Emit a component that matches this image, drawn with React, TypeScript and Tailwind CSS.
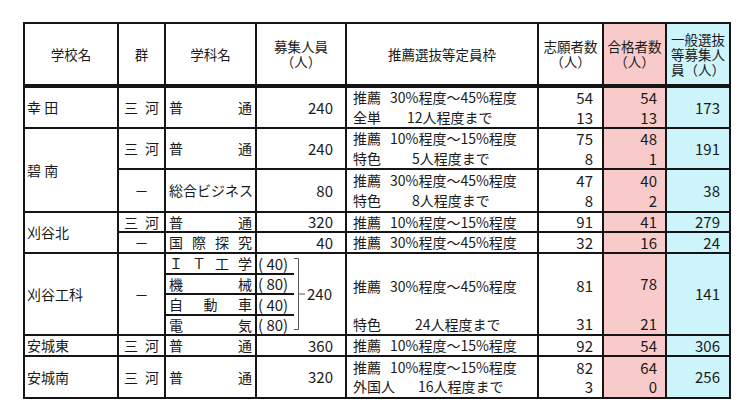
import React from 'react';

const pink = 'bg-[#f9caca]';
const cyan = 'bg-[#cdf4fa]';

type QuotaLine = [string, string, string];

const Spread = ({ text }: { text: string }) => (
  <div className="flex h-full items-center justify-between bg-white px-[3px]">
    {[...text].map((c, i) => (
      <span key={i}>{c}</span>
    ))}
  </div>
);

const Group = ({ mikawa }: { mikawa?: boolean }) =>
  mikawa ? (
    <div className="flex h-full items-center justify-center gap-[7px] bg-white">
      <span>三</span>
      <span>河</span>
    </div>
  ) : (
    <div className="flex h-full items-center justify-center bg-white">－</div>
  );

const School = ({ name }: { name: string }) => (
  <div className="flex h-full items-center bg-white pl-[2px]">{name}</div>
);

const Quota = ({ lines }: { lines: QuotaLine[] }) => (
  <div className="flex h-full flex-col justify-center bg-white pl-[6px]">
    {lines.map(([label, value, pad]) => (
      <div key={label + value} className="flex h-[19.5px] items-center whitespace-nowrap">
        <span className="w-[37px] shrink-0">{label}</span>
        <span className={pad}>{value}</span>
      </div>
    ))}
  </div>
);

const Nums = ({ vals, bg = 'bg-white', pr = 'pr-[9px]' }: { vals: string[]; bg?: string; pr?: string }) => (
  <div className={`flex h-full flex-col justify-center text-right text-[15px] ${pr} ${bg}`}>
    {vals.map((v, i) => (
      <div key={i} className="h-[19.5px] leading-[19.5px]">
        {v}
      </div>
    ))}
  </div>
);

const Head = ({ children, bg = 'bg-white' }: { children: React.ReactNode; bg?: string }) => (
  <div className={`flex h-full items-center justify-center border-b-2 border-[#151515] text-center text-[13.5px] leading-[15px] ${bg}`}>
    <div>{children}</div>
  </div>
);

const suisen30 = '30%程度～45%程度';
const suisen10 = '10%程度～15%程度';

export default function App() {
  return (
    <div className="h-[418px] w-[750px] bg-white pl-[23px] pt-[22px] font-['Noto_Sans_CJK_JP','Noto_Sans',sans-serif] text-[14px] text-[#1a1a1a]">
      <div className="grid w-fit grid-cols-[92px_45px_89px_88px_190px_63px_61px_62px] grid-rows-[62px_39px_39px_41px_18px_19px_80px_19px_40px] gap-[2px] bg-[#151515] p-[2px]">
        {/* header */}
        <Head>学校名</Head>
        <Head>群</Head>
        <Head>学科名</Head>
        <Head>
          募集人員
          <br />
          （人）
        </Head>
        <Head>推薦選抜等定員枠</Head>
        <Head>
          志願者数
          <br />
          （人）
        </Head>
        <Head bg={pink}>
          合格者数
          <br />
          （人）
        </Head>
        <Head bg={cyan}>
          一般選抜
          <br />
          等募集人
          <br />
          員（人）
        </Head>

        {/* 幸田 */}
        <School name="幸 田" />
        <Group mikawa />
        <Spread text="普通" />
        <Nums vals={['240']} pr="pr-[12px]" />
        <Quota
          lines={[
            ['推薦', suisen30, 'pl-0'],
            ['全単', '12人程度まで', 'pl-[17px]'],
          ]}
        />
        <Nums vals={['54', '13']} />
        <Nums vals={['54', '13']} bg={pink} pr="pr-[8px]" />
        <Nums vals={['173']} bg={cyan} />

        {/* 碧南 */}
        <div className="row-span-2">
          <School name="碧 南" />
        </div>
        <Group mikawa />
        <Spread text="普通" />
        <Nums vals={['240']} pr="pr-[12px]" />
        <Quota
          lines={[
            ['推薦', suisen10, 'pl-0'],
            ['特色', '5人程度まで', 'pl-[22px]'],
          ]}
        />
        <Nums vals={['75', '8']} />
        <Nums vals={['48', '1']} bg={pink} pr="pr-[8px]" />
        <Nums vals={['191']} bg={cyan} />

        <Group />
        <div className="flex h-full items-center bg-white pl-[3px]">総合ビジネス</div>
        <Nums vals={['80']} pr="pr-[12px]" />
        <Quota
          lines={[
            ['推薦', suisen30, 'pl-0'],
            ['特色', '8人程度まで', 'pl-[22px]'],
          ]}
        />
        <Nums vals={['47', '8']} />
        <Nums vals={['40', '2']} bg={pink} pr="pr-[8px]" />
        <Nums vals={['38']} bg={cyan} />

        {/* 刈谷北 */}
        <div className="row-span-2">
          <School name="刈谷北" />
        </div>
        <Group mikawa />
        <Spread text="普通" />
        <Nums vals={['320']} pr="pr-[12px]" />
        <Quota lines={[['推薦', suisen10, 'pl-0']]} />
        <Nums vals={['91']} />
        <Nums vals={['41']} bg={pink} pr="pr-[8px]" />
        <Nums vals={['279']} bg={cyan} />

        <Group />
        <Spread text="国際探究" />
        <Nums vals={['40']} pr="pr-[12px]" />
        <Quota lines={[['推薦', suisen30, 'pl-0']]} />
        <Nums vals={['32']} />
        <Nums vals={['16']} bg={pink} pr="pr-[8px]" />
        <Nums vals={['24']} bg={cyan} />

        {/* 刈谷工科 */}
        <School name="刈谷工科" />
        <Group />
        <div className="flex h-[80px] flex-col bg-white">
          {['ＩＴ工学', '機械', '自動車', '電気'].map((t, i) => (
            <div
              key={t}
              className={`flex min-h-0 flex-1 items-center justify-between px-[3px] leading-none ${
                i < 3 ? 'border-b-2 border-[#151515]' : ''
              }`}
            >
              {[...t].map((c, j) => (
                <span key={j}>{c}</span>
              ))}
            </div>
          ))}
        </div>
        <div className="flex h-[80px] bg-white">
          <div className="flex w-[37px] shrink-0 flex-col text-[15px]">
            {['40', '80', '40', '80'].map((n, i) => (
              <div
                key={i}
                className={`flex min-h-0 flex-1 items-center whitespace-pre pl-[1px] leading-none ${
                  i < 3 ? 'border-b-2 border-[#151515]' : ''
                }`}
              >
                {'( ' + n + ')'}
              </div>
            ))}
          </div>
          <svg width="13" height="80" viewBox="0 0 13 80" className="shrink-0">
            <path d="M0 4.5H4.5V75.5H0M4.5 40H11" fill="none" stroke="#555" strokeWidth="1" />
          </svg>
          <div className="flex flex-1 items-center text-[15px]">240</div>
        </div>
        <div className="flex h-full flex-col bg-white pl-[6px]">
          <div className="flex h-[60px] items-center whitespace-nowrap pt-[5px]">
            <span className="w-[37px] shrink-0">推薦</span>
            <span>{suisen30}</span>
          </div>
          <div className="flex h-[20px] items-center whitespace-nowrap">
            <span className="w-[37px] shrink-0">特色</span>
            <span className="pl-[25px]">24人程度まで</span>
          </div>
        </div>
        <div className="flex h-full flex-col bg-white pr-[9px] text-right text-[15px]">
          <div className="flex h-[60px] items-center justify-end pt-[5px]">81</div>
          <div className="flex h-[20px] items-center justify-end">31</div>
        </div>
        <div className={`flex h-full flex-col pr-[8px] text-right text-[15px] ${pink}`}>
          <div className="flex h-[60px] items-center justify-end">78</div>
          <div className="flex h-[20px] items-center justify-end">21</div>
        </div>
        <Nums vals={['141']} bg={cyan} />

        {/* 安城東 */}
        <School name="安城東" />
        <Group mikawa />
        <Spread text="普通" />
        <Nums vals={['360']} pr="pr-[12px]" />
        <Quota lines={[['推薦', suisen10, 'pl-0']]} />
        <Nums vals={['92']} />
        <Nums vals={['54']} bg={pink} pr="pr-[8px]" />
        <Nums vals={['306']} bg={cyan} />

        {/* 安城南 */}
        <School name="安城南" />
        <Group mikawa />
        <Spread text="普通" />
        <Nums vals={['320']} pr="pr-[12px]" />
        <Quota
          lines={[
            ['推薦', suisen10, 'pl-0'],
            ['外国人', '16人程度まで', 'pl-[28px]'],
          ]}
        />
        <Nums vals={['82', '3']} />
        <Nums vals={['64', '0']} bg={pink} pr="pr-[8px]" />
        <Nums vals={['256']} bg={cyan} />
      </div>
    </div>
  );
}
